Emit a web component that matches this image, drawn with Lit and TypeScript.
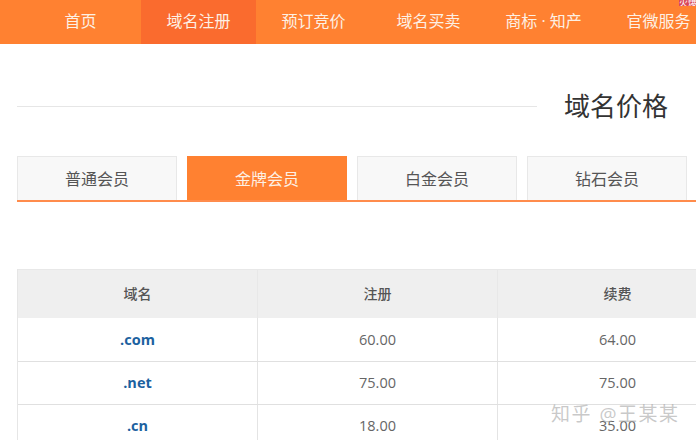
import { LitElement, html, css } from "lit";
import { customElement } from "lit/decorators.js";

const NAV = ["首页", "域名注册", "预订竞价", "域名买卖", "商标 · 知产", "官微服务"];
const TABS = ["普通会员", "金牌会员", "白金会员", "钻石会员"];
const ROWS = [
  [".com", "60.00", "64.00"],
  [".net", "75.00", "75.00"],
  [".cn", "18.00", "35.00"],
];

@customElement("app-root")
export class AppRoot extends LitElement {
  static styles = css`
    :host {
      display: block;
      width: 696px;
      height: 440px;
      overflow: hidden;
      position: relative;
      background: #fff;
      font-family: "Open Sans", "Noto Sans CJK SC", sans-serif;
    }
    .nav {
      display: flex;
      height: 44px;
      background: #ff8131;
      overflow: hidden;
      position: relative;
    }
    .nav a {
      flex: 0 0 115px;
      line-height: 43px;
      text-align: center;
      color: #fdf0e4;
      font-size: 16px;
      white-space: nowrap;
    }
    .nav a:first-child {
      flex-basis: 121px;
      padding-left: 20px;
    }
    .nav a.on {
      background: #fa6b2e;
    }
    .corner {
      position: absolute;
      right: 0;
      top: 0;
      width: 17px;
      height: 6px;
      background: #d8475a;
      color: #fff;
      font-size: 9px;
      line-height: 5px;
      overflow: hidden;
      white-space: nowrap;
    }
    .title {
      display: flex;
      align-items: center;
      margin: 42px 0 0 17px;
      height: 40px;
    }
    .title i {
      flex: 0 0 520px;
      height: 1px;
      background: #e6e6e6;
    }
    .title h1 {
      margin: 0 0 0 27px;
      font-size: 26px;
      line-height: 40px;
      font-weight: 400;
      color: #333;
      white-space: nowrap;
    }
    .tabs {
      display: flex;
      gap: 10px;
      margin: 30px 0 0 17px;
      height: 44px;
      border-bottom: 2px solid #ff8c4c;
    }
    .tab {
      flex: 0 0 160px;
      box-sizing: border-box;
      border: 1px solid #e8e8e8;
      border-bottom: 0;
      background: #f8f8f8;
      color: #555;
      font-size: 16px;
      line-height: 45px;
      text-align: center;
    }
    .tab.on {
      background: #ff8131;
      border-color: #ff8131;
      color: #fdf0e4;
    }
    .table {
      margin: 67px 0 0 17px;
      width: 720px;
      border-left: 1px solid #e6e6e6;
      box-sizing: border-box;
    }
    .row {
      display: grid;
      grid-template-columns: 240px 240px 240px;
      height: 43px;
      border-bottom: 1px solid #e0e0e0;
      box-sizing: border-box;
    }
    .row.first {
      height: 44px;
    }
    .row.head {
      height: 49px;
      background: #efefef;
      border-top: 1px solid #e8e8e8;
      border-bottom: 0;
    }
    .cell {
      display: flex;
      align-items: center;
      justify-content: center;
      border-right: 1px solid #e4e4e4;
      box-sizing: border-box;
      padding-bottom: 2px;
      font-size: 14.5px;
      color: #666;
    }
    .first .cell {
      padding-bottom: 0;
    }
    .head .cell {
      font-size: 14px;
      font-weight: 500;
      color: #555;
      border-right-color: #e8e8e8;
    }
    .cell.dom {
      color: #1c619f;
      font-weight: 700;
    }
    .mark {
      position: absolute;
      left: 551px;
      top: 401px;
      font-size: 19px;
      line-height: 26px;
      word-spacing: 1px;
      letter-spacing: 1.5px;
      color: rgba(165, 165, 165, 0.6);
      white-space: nowrap;
    }
  `;

  render() {
    return html`
      <div class="nav">
        ${NAV.map((n, i) => html`<a class=${i === 1 ? "on" : ""}>${n}</a>`)}
        <div class="corner">火爆</div>
      </div>
      <div class="title"><i></i><h1>域名价格</h1></div>
      <div class="tabs">
        ${TABS.map((t, i) => html`<div class="tab ${i === 1 ? "on" : ""}">${t}</div>`)}
      </div>
      <div class="table">
        <div class="row head">
          <div class="cell">域名</div>
          <div class="cell">注册</div>
          <div class="cell">续费</div>
        </div>
        ${ROWS.map(
          (r, i) => html`<div class="row ${i === 0 ? "first" : ""}">
            <div class="cell dom">${r[0]}</div>
            <div class="cell">${r[1]}</div>
            <div class="cell">${r[2]}</div>
          </div>`
        )}
      </div>
      <div class="mark">知乎 @王某某</div>
    `;
  }
}
